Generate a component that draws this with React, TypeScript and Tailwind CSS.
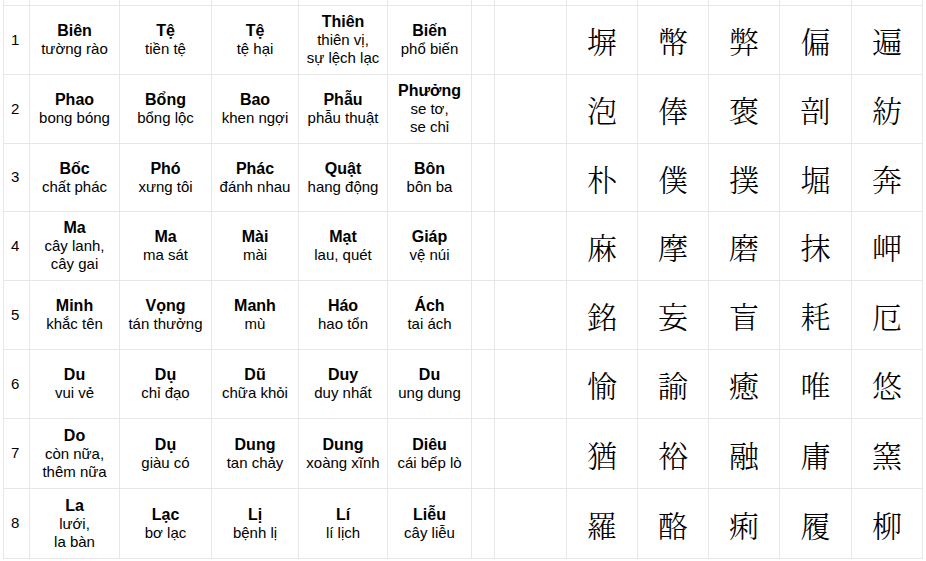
type Word = { head: string; lines: string[] };

const rows: { words: Word[]; kanji: string[] }[] = [
  {
    words: [
      { head: "Biên", lines: ["tường rào"] },
      { head: "Tệ", lines: ["tiền tệ"] },
      { head: "Tệ", lines: ["tệ hại"] },
      { head: "Thiên", lines: ["thiên vị,", "sự lệch lạc"] },
      { head: "Biến", lines: ["phổ biến"] },
    ],
    kanji: ["塀", "幣", "弊", "偏", "遍"],
  },
  {
    words: [
      { head: "Phao", lines: ["bong bóng"] },
      { head: "Bổng", lines: ["bổng lộc"] },
      { head: "Bao", lines: ["khen ngợi"] },
      { head: "Phẫu", lines: ["phẫu thuật"] },
      { head: "Phưởng", lines: ["se tơ,", "se chỉ"] },
    ],
    kanji: ["泡", "俸", "褒", "剖", "紡"],
  },
  {
    words: [
      { head: "Bốc", lines: ["chất phác"] },
      { head: "Phó", lines: ["xưng tôi"] },
      { head: "Phác", lines: ["đánh nhau"] },
      { head: "Quật", lines: ["hang động"] },
      { head: "Bôn", lines: ["bôn ba"] },
    ],
    kanji: ["朴", "僕", "撲", "堀", "奔"],
  },
  {
    words: [
      { head: "Ma", lines: ["cây lanh,", "cây gai"] },
      { head: "Ma", lines: ["ma sát"] },
      { head: "Mài", lines: ["mài"] },
      { head: "Mạt", lines: ["lau, quét"] },
      { head: "Giáp", lines: ["vệ núi"] },
    ],
    kanji: ["麻", "摩", "磨", "抹", "岬"],
  },
  {
    words: [
      { head: "Minh", lines: ["khắc tên"] },
      { head: "Vọng", lines: ["tán thưởng"] },
      { head: "Manh", lines: ["mù"] },
      { head: "Háo", lines: ["hao tổn"] },
      { head: "Ách", lines: ["tai ách"] },
    ],
    kanji: ["銘", "妄", "盲", "耗", "厄"],
  },
  {
    words: [
      { head: "Du", lines: ["vui vẻ"] },
      { head: "Dụ", lines: ["chỉ đạo"] },
      { head: "Dũ", lines: ["chữa khỏi"] },
      { head: "Duy", lines: ["duy nhất"] },
      { head: "Du", lines: ["ung dung"] },
    ],
    kanji: ["愉", "諭", "癒", "唯", "悠"],
  },
  {
    words: [
      { head: "Do", lines: ["còn nữa,", "thêm nữa"] },
      { head: "Dụ", lines: ["giàu có"] },
      { head: "Dung", lines: ["tan chảy"] },
      { head: "Dung", lines: ["xoàng xĩnh"] },
      { head: "Diêu", lines: ["cái bếp lò"] },
    ],
    kanji: ["猶", "裕", "融", "庸", "窯"],
  },
  {
    words: [
      { head: "La", lines: ["lưới,", "la bàn"] },
      { head: "Lạc", lines: ["bơ lạc"] },
      { head: "Lị", lines: ["bệnh lị"] },
      { head: "Lí", lines: ["lí lịch"] },
      { head: "Liễu", lines: ["cây liễu"] },
    ],
    kanji: ["羅", "酪", "痢", "履", "柳"],
  },
];

const cell = "border-r border-b border-[#e7e7e7]";

const App = () => {
  return (
    <div className="h-[561px] w-[926px] overflow-hidden bg-white font-['Liberation_Sans',Arial,sans-serif] text-black">
      <div className="ml-[3px] grid w-fit grid-cols-[26px_90px_92px_87px_89px_84px_23px_72px_71px_71px_71px_72px_71px] grid-rows-[6px_69px_69px_68px_69px_69px_69px_70px_70px] border-l border-[#e7e7e7]">
        {Array.from({ length: 13 }).map((_, i) => (
          <div key={`top-${i}`} className={cell} />
        ))}
        {rows.map((row, r) => (
          <div key={r} className="contents">
            <div className={`${cell} flex items-center pl-[7px] text-[15px]`}>
              {r + 1}
            </div>
            {row.words.map((w, i) => (
              <div
                key={i}
                className={`${cell} flex flex-col items-center justify-center text-center leading-[18px]`}
              >
                <span className="text-[16px] font-bold">{w.head}</span>
                {w.lines.map((l, j) => (
                  <span key={j} className="whitespace-nowrap text-[15px]">
                    {l}
                  </span>
                ))}
              </div>
            ))}
            <div className={cell} />
            <div className={cell} />
            {row.kanji.map((k, i) => (
              <div
                key={i}
                className={`${cell} flex items-center justify-center font-['Noto_Serif_CJK_JP','Noto_Sans_CJK_JP',serif] text-[30px] font-light leading-none`}
              >
                {k}
              </div>
            ))}
          </div>
        ))}
      </div>
    </div>
  );
};

export default App;
